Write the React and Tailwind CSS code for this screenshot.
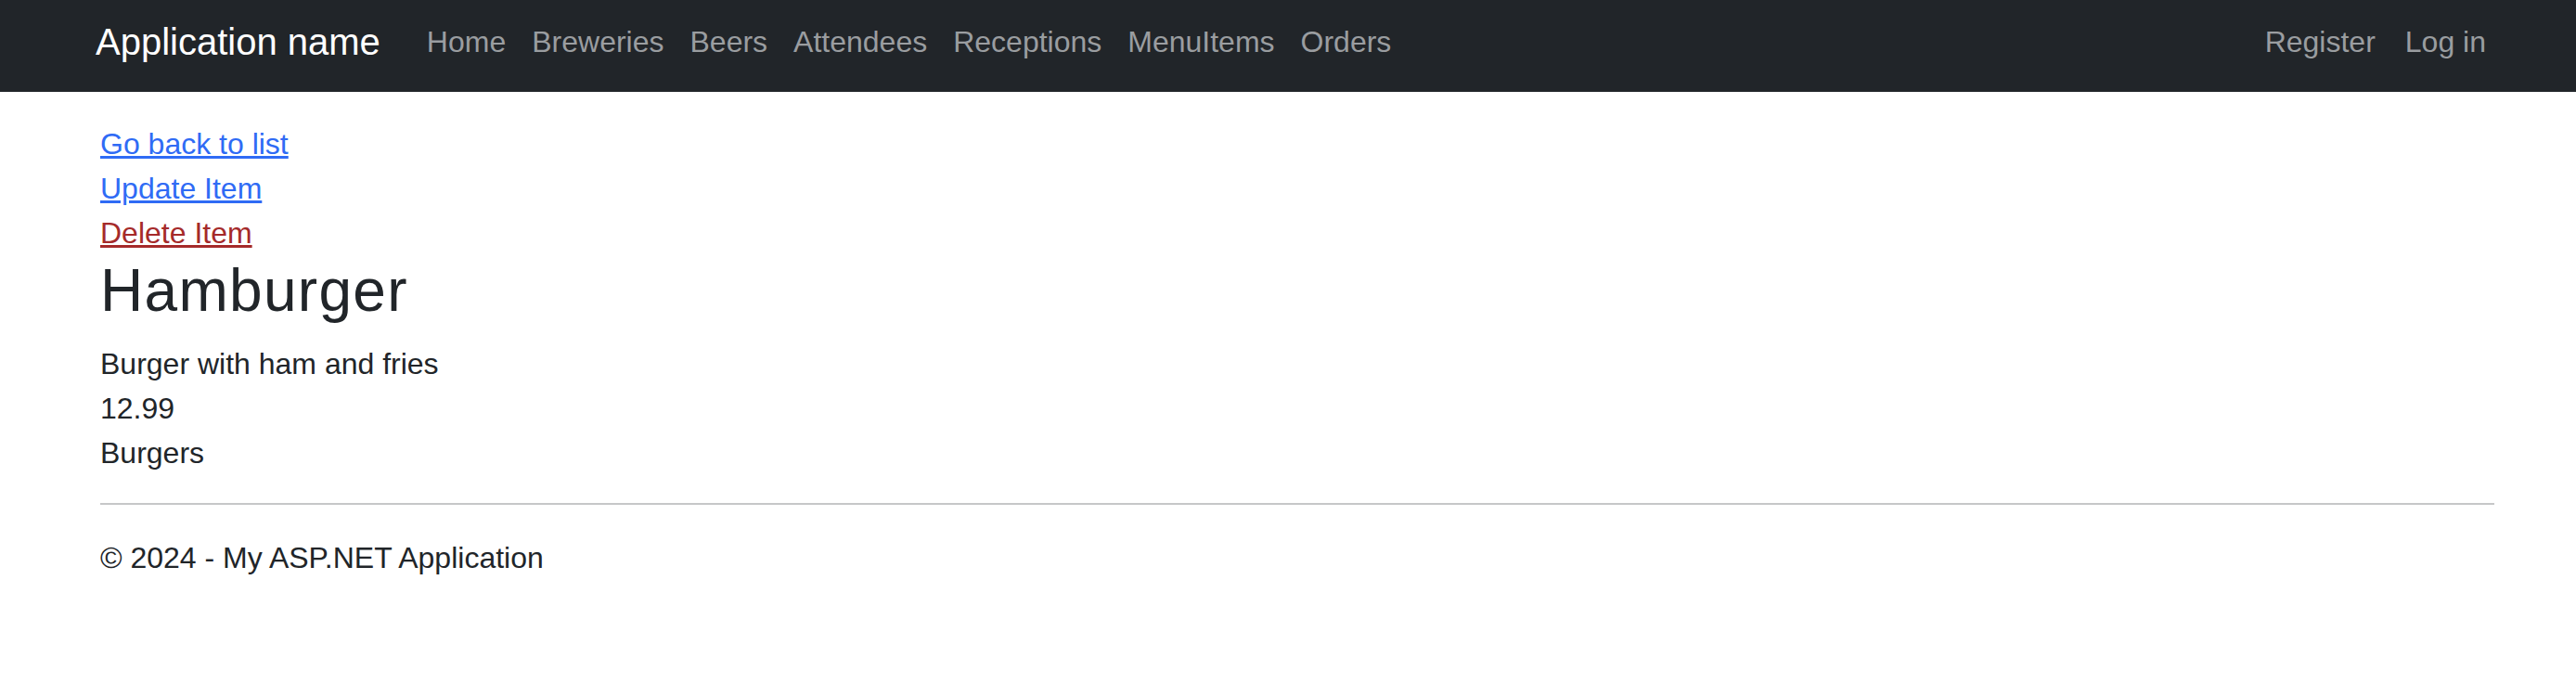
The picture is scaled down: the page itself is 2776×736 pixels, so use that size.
const navLinks = ["Home", "Breweries", "Beers", "Attendees", "Receptions", "MenuItems", "Orders"];

export default function App() {
  return (
    <div className="min-h-[736px] bg-white text-[#212529] text-[32px] leading-[48px]" style={{ fontFamily: '"Liberation Sans", Arial, sans-serif' }}>
      {/* Navbar */}
      <nav className="bg-[#212529] h-[99px] pb-[10px] flex items-center pl-[103px] pr-[81px]">
        <a href="#" className="text-white text-[40px] leading-[60px] mr-[36px] no-underline">
          Application name
        </a>
        <ul className="flex items-center">
          {navLinks.map((l) => (
            <li key={l}>
              <a href="#" className="block px-[14px] text-[#9a9da0] no-underline">
                {l}
              </a>
            </li>
          ))}
        </ul>
        <ul className="flex items-center ml-auto">
          <li>
            <a href="#" className="block px-4 text-[#9a9da0] no-underline">Register</a>
          </li>
          <li>
            <a href="#" className="block px-4 text-[#9a9da0] no-underline">Log in</a>
          </li>
        </ul>
      </nav>

      {/* Body */}
      <div className="pl-[108px] pr-[88px] pt-[32px]">
        <div className="flex flex-col items-start">
          <a href="#" className="text-[#2f6bf5] underline">Go back to list</a>
          <a href="#" className="text-[#2f6bf5] underline">Update Item</a>
          <a href="#" className="text-[#a52a2a] underline">Delete Item</a>
        </div>
        <h1 className="text-[64px] leading-[1.2] font-medium tracking-[1.3px] mb-[16px]">Hamburger</h1>
        <div>Burger with ham and fries</div>
        <div>12.99</div>
        <div>Burgers</div>

        <hr className="mt-[30px] mb-[33px] border-0 h-[2px] bg-[#c6c7c8]" />

        <footer>
          <p>© 2024 - My ASP.NET Application</p>
        </footer>
      </div>
    </div>
  );
}
